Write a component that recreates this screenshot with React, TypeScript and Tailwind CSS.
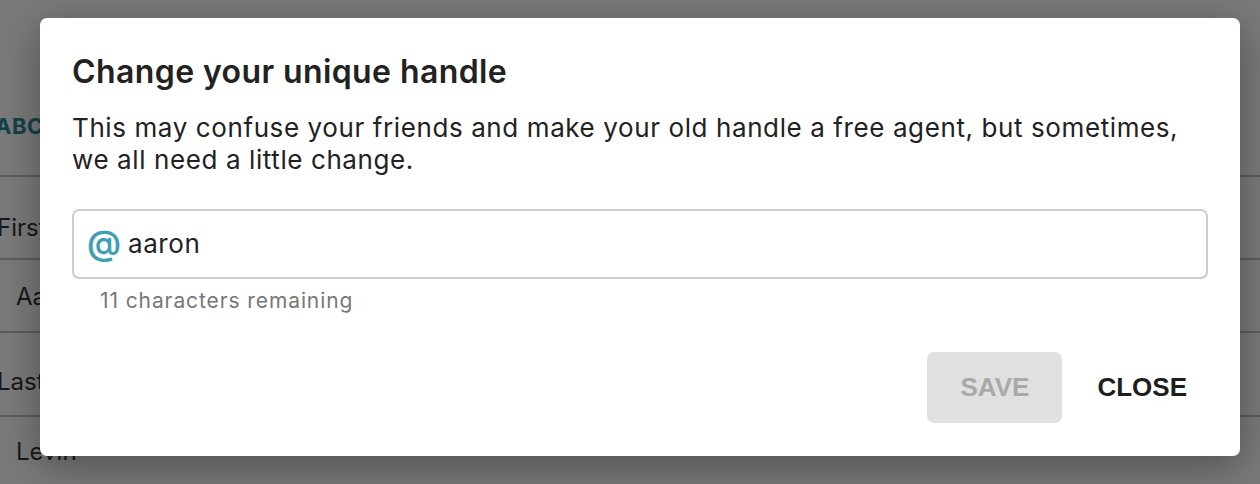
import React from "react";

const rows = [
  { label: "First", indent: false, h: "h-[83px]", pt: "pt-[36px]" },
  { label: "Aa", indent: true, h: "h-[73px]", pt: "pt-[22px]" },
  { label: "Last", indent: false, h: "h-[84px]", pt: "pt-[34px]" },
  { label: "Levin", indent: true, h: "h-[70px]", pt: "pt-[20px]" },
];

export default function App() {
  return (
    <div className="relative w-[1260px] h-[484px] overflow-hidden bg-white font-['Inter',sans-serif]">
      {/* page under the dialog */}
      <div className="flex flex-col">
        <div className="h-[175px] pt-[110px] -ml-[5px] text-[22px] font-bold text-[#2a8799] tracking-[0.5px]">
          ABC
        </div>
        {rows.map((r) => (
          <div
            key={r.label}
            className={`border-t-2 border-[#c2c2c2] ${r.h} ${r.pt} text-[24px] leading-[30px] text-[#333] ${
              r.indent ? "pl-[16px]" : "-ml-[3px]"
            }`}
          >
            {r.label}
          </div>
        ))}
      </div>

      {/* overlay */}
      <div className="absolute inset-0 bg-[rgba(0,0,0,0.52)]" />

      {/* dialog */}
      <div className="absolute left-[40px] top-[18px] w-[1200px] h-[438px] bg-white rounded-[7px] shadow-[0_10px_40px_rgba(0,0,0,0.35)] flex flex-col px-[32px] pt-[34px] pb-[33px]">
        <h2 className="text-[32px] leading-[40px] font-semibold text-[#222] tracking-[0.4px]">
          Change your unique handle
        </h2>
        <p className="mt-[20px] text-[26px] leading-[32px] text-[#222] tracking-[0.6px] whitespace-nowrap">
          This may confuse your friends and make your old handle a free agent, but sometimes,
          <br />
          we all need a little change.
        </p>
        <div className="mt-[33px] h-[70px] border-2 border-[#cccccc] rounded-[7px] flex items-center pl-[13px] gap-[7px]">
          <span className="text-[34px] leading-none font-semibold text-[#3f9fb4] -mt-[2px]">@</span>
          <span className="text-[26px] leading-none text-[#222] tracking-[0.6px]">aaron</span>
        </div>
        <div className="mt-[9px] pl-[28px] text-[21px] leading-[26px] text-[#777] tracking-[0.9px]">
          11 characters remaining
        </div>
        <div className="mt-auto flex justify-end items-center gap-[11px] -mr-[3px]">
          <button className="w-[135px] h-[71px] rounded-[7px] bg-[#e0e0e0] text-[#a9a9a9] font-['Liberation_Sans',sans-serif] font-bold text-[26px]">
            SAVE
          </button>
          <button className="h-[71px] px-[24px] rounded-[7px] text-[#1e1e1e] font-['Liberation_Sans',sans-serif] font-bold text-[26px]">
            CLOSE
          </button>
        </div>
      </div>
    </div>
  );
}
